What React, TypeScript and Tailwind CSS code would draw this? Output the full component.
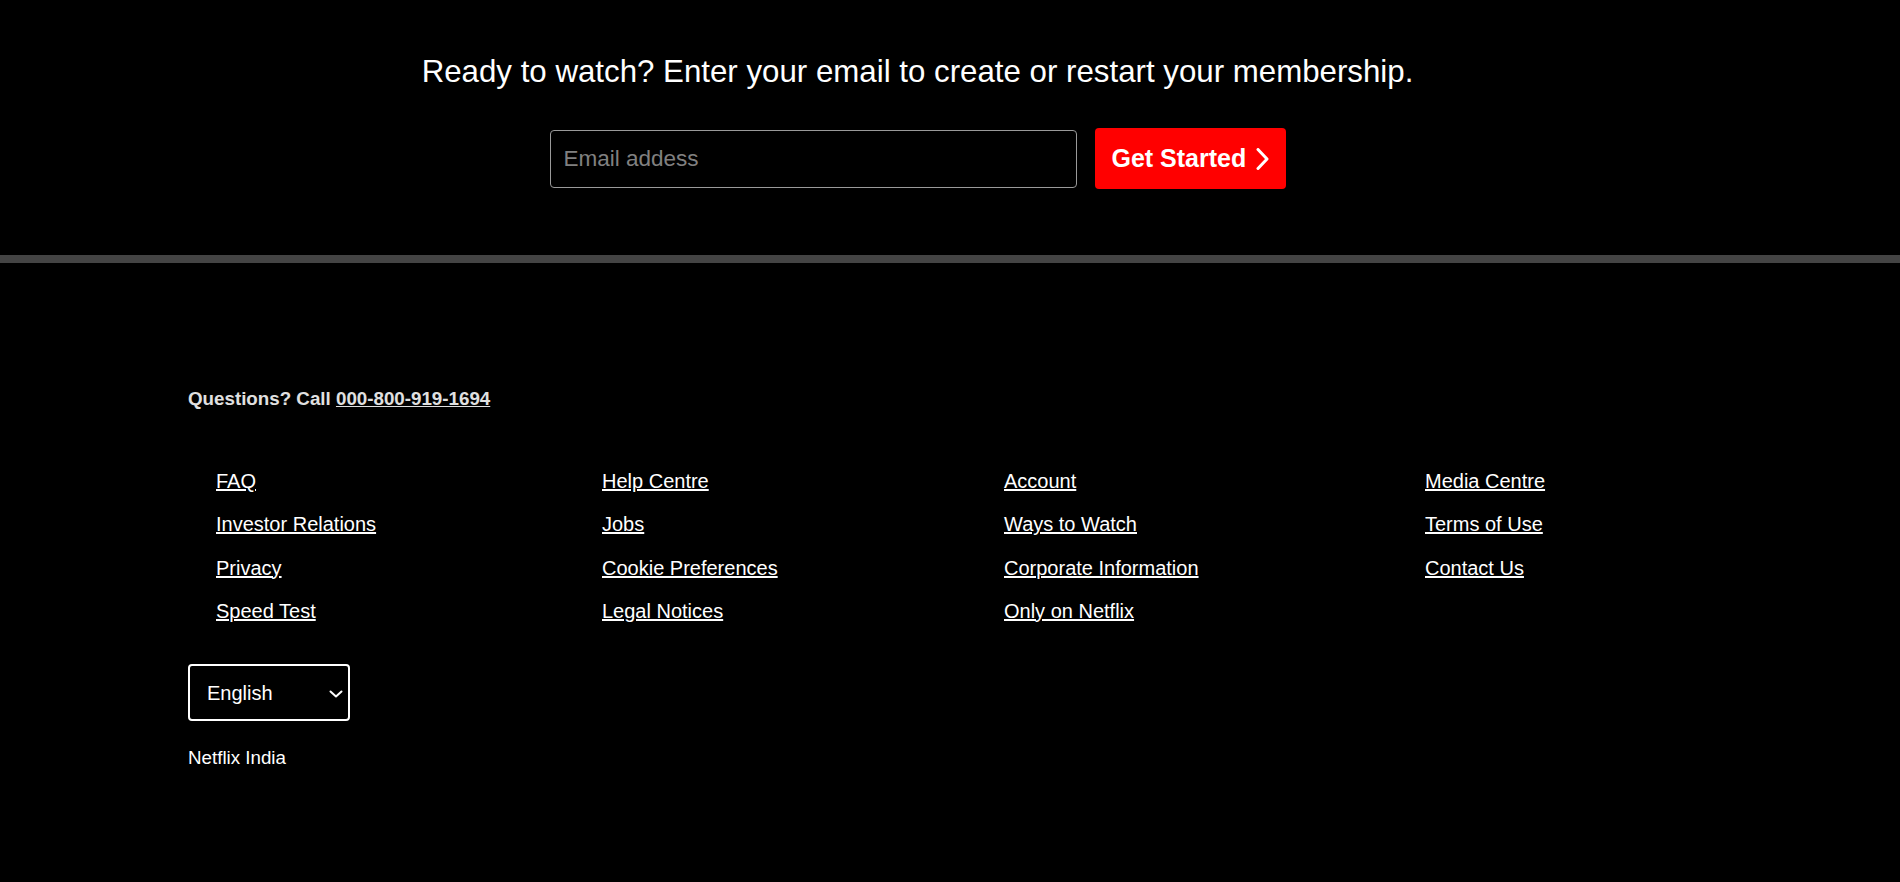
import React from "react";

const columns: string[][] = [
  ["FAQ", "Investor Relations", "Privacy", "Speed Test"],
  ["Help Centre", "Jobs", "Cookie Preferences", "Legal Notices"],
  ["Account", "Ways to Watch", "Corporate Information", "Only on Netflix"],
  ["Media Centre", "Terms of Use", "Contact Us"],
];

export default function App() {
  return (
    <div className="min-h-screen w-full bg-black text-white font-['Liberation_Sans',Arial,sans-serif]">
      <section className="flex flex-col items-center pt-[54px] pb-[66px] pr-[65px]">
        <h3 className="text-[31.25px] leading-[36px] font-normal text-white">
          Ready to watch? Enter your email to create or restart your membership.
        </h3>
        <form
          className="mt-[38px] flex items-center gap-[18px]"
          onSubmit={(e) => e.preventDefault()}
        >
          <input
            type="email"
            placeholder="Email addess"
            className="h-[58px] w-[527px] rounded-[4px] border border-[#9a9a9a] bg-black px-[13px] text-[22.5px] text-white placeholder:text-[#808080] outline-none"
          />
          <button
            type="submit"
            className="flex h-[61px] w-[191px] items-center gap-[10px] rounded-[4px] bg-[#ff0000] pl-[17px] text-[25px] font-bold text-white"
          >
            <span>Get Started</span>
            <svg width="13" height="22" viewBox="0 0 13 22" fill="none">
              <polyline
                points="2,1.5 11,11 2,20.5"
                stroke="white"
                strokeWidth="3"
                strokeLinecap="round"
                strokeLinejoin="round"
              />
            </svg>
          </button>
        </form>
      </section>

      <div className="h-[8px] w-full bg-[#444444]" />

      <footer className="px-[188px] pt-[125px] pb-[100px]">
        <p className="text-[18.75px] leading-[22px] font-bold text-[#e0e0e0]">
          Questions? Call{" "}
          <a href="#" className="underline">
            000-800-919-1694
          </a>
        </p>

        <div className="mt-[60px] grid grid-cols-[386px_402px_421px_1fr] pl-[28px]">
          {columns.map((col, i) => (
            <ul key={i} className="flex flex-col gap-[20px]">
              {col.map((item) => (
                <li key={item} className="text-[20px] leading-[23.3px]">
                  <a href="#" className="text-white underline">
                    {item}
                  </a>
                </li>
              ))}
            </ul>
          ))}
        </div>

        <div className="mt-[41px] relative flex h-[57px] w-[162px] items-center rounded-[4px] border-2 border-white pl-[17px] text-[20px] text-white">
          <span>English</span>
          <svg
            className="absolute right-[5px] top-[24px]"
            width="14"
            height="8"
            viewBox="0 0 14 8"
            fill="none"
          >
            <polyline
              points="1.5,1.5 7,6.5 12.5,1.5"
              stroke="white"
              strokeWidth="2"
              strokeLinecap="round"
              strokeLinejoin="round"
            />
          </svg>
        </div>

        <p className="mt-[26px] text-[18.75px] leading-[22px] text-white">Netflix India</p>
      </footer>
    </div>
  );
}
